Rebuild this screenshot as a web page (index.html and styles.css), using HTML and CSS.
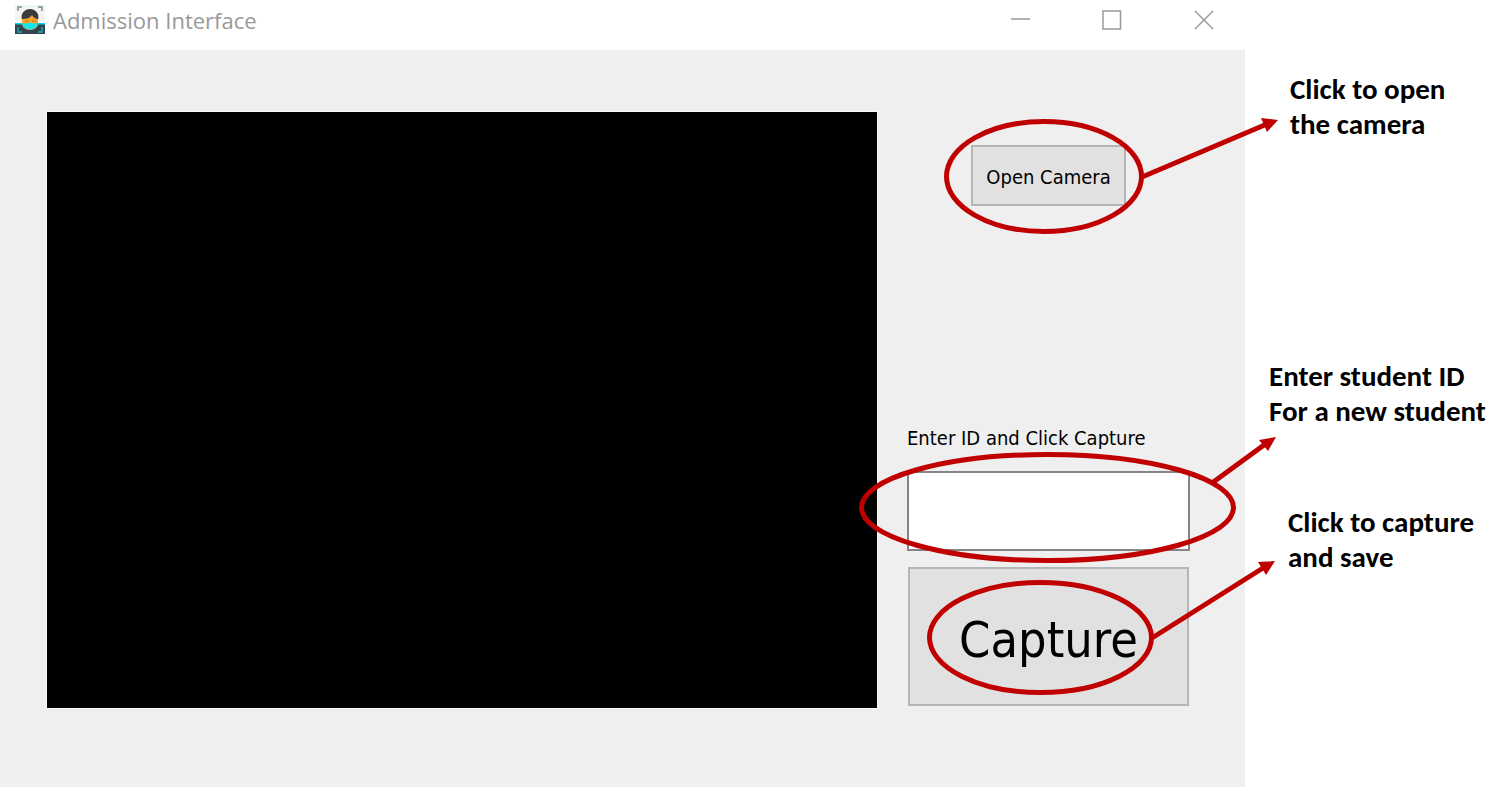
FILE: index.html
```
<!DOCTYPE html>
<html lang="en">
<head>
<meta charset="utf-8">
<title>Admission Interface</title>
<link rel="stylesheet" href="styles.css">
</head>
<body>
<div class="page">
  <main class="window">
    <header class="titlebar">
      <svg class="app-icon" width="30" height="30" viewBox="0 0 30 30" aria-hidden="true">
        <rect width="30" height="29" fill="#f3f5f5"/>
        <path d="M3 6V2h4M23 2h4v4" fill="none" stroke="#6d8c92" stroke-width="1.4"/>
        <path d="M0 18h30v11H0z" fill="#35424f"/>
        <path d="M0 18h30v1.500H0z" fill="#12d5de"/>
        <path d="M7 15c-2-7 3-11 8-11s10 4 8 11l-1 3H8z" fill="#3b3b3d"/>
        <path d="M7 14c5 0 8-1 10-4 1 2 3 4 6 4v4c0 4-3 7-8 7s-8-3-8-7z" fill="#f9a62b"/>
        <path d="M10 16.500q2-1.500 4 0M17 16.500q2-1.500 4 0" fill="none" stroke="#b9741c"/>
        <path d="M7 18q2 0 4 .5l4-1 4 1q2-.5 4-.5c0 4-4 6.500-8 6.500S7 22 7 18z" fill="#19e3ea"/>
        <path d="M3 22v5h4M23 27h4v-5" fill="none" stroke="#18aebb" stroke-width="1.400"/>
      </svg>
      <h1 class="title">Admission Interface</h1>
      <div class="controls">
        <button class="control" type="button" aria-label="Minimize"><svg width="20" height="20" viewBox="0 0 20 20"><path d="M1 9h19"/></svg></button>
        <button class="control" type="button" aria-label="Maximize"><svg width="20" height="20" viewBox="0 0 20 20"><path d="M1 1h17.500v18H1z"/></svg></button>
        <button class="control" type="button" aria-label="Close"><svg width="20" height="20" viewBox="0 0 20 20"><path d="M1 1l18 18M19 1L1 19"/></svg></button>
      </div>
    </header>
    <div class="content">
      <div class="camera"></div>
      <form class="panel">
        <button class="open" type="button">Open Camera</button>
        <label class="label" for="student-id">Enter ID and Click Capture</label>
        <input class="field" id="student-id" type="text">
        <button class="capture" type="button">Capture</button>
      </form>
    </div>
  </main>
  <aside class="notes">
    <p class="note note-open">Click to open<br>the camera</p>
    <p class="note note-id">Enter student ID<br>For a new student</p>
    <p class="note note-capture">Click to capture<br>and save</p>
  </aside>
  <svg class="callouts" width="654" height="787" viewBox="850 0 654 787" aria-hidden="true">
    <g fill="none" stroke="#c00000" stroke-width="5">
      <ellipse cx="1044" cy="176.500" rx="97.500" ry="55"/>
      <ellipse cx="1047.500" cy="507.500" rx="186" ry="53"/>
      <ellipse cx="1040.500" cy="637.500" rx="111" ry="55"/>
      <path d="M1142 177L1267 124M1212 483L1264 445M1152 638L1263 568"/>
    </g>
    <path d="M1278 120L1261 118L1267 132ZM1276 437L1259 440L1268 451ZM1275 561L1258 562L1266 575Z" fill="#c00000"/>
  </svg>
</div>
</body>
</html>
```
FILE: styles.css
```
* {
  box-sizing: border-box;
}

body {
  margin: 0;
  background: #fff;
  color: #000;
}

.page {
  position: relative;
  display: grid;
  grid-template-columns: minmax(0, 1fr) 259px;
  min-height: 100vh;
}

.window {
  display: flex;
  flex-direction: column;
  background: #efefef;
}

.titlebar {
  display: flex;
  align-items: center;
  gap: 8px;
  height: 50px;
  padding: 0 31px 10px 15px;
  background: #fff;
}

.title {
  flex: 1;
  margin: 0;
  font: 400 22px/30px "Open Sans", "Noto Sans", sans-serif;
  color: #999;
}

.controls {
  display: flex;
  gap: 72px;
}

.control {
  display: flex;
  padding: 0;
  border: 0;
  background: none;
}

.control path {
  fill: none;
  stroke: #999;
  stroke-width: 1.5;
}

.content {
  display: grid;
  grid-template-columns: minmax(0, 1fr) 283px;
  gap: 30px;
  padding: 62px 55px 79px 47px;
}

.camera {
  min-height: 596px;
  background: #000;
  box-shadow: 0 0 0 1px #f8f8f8;
}

.panel {
  display: flex;
  flex-direction: column;
  padding-top: 33px;
  font-family: "DejaVu Sans Condensed", "DejaVu Sans", sans-serif;
}

.open,
.capture {
  padding: 2px 0 0;
  border: 2px solid #b5b5b5;
  background: #e1e1e1;
  font-family: inherit;
  color: #000;
}

.open {
  align-self: center;
  width: 155px;
  height: 61px;
  font-size: 20px;
}

.label {
  margin-top: 220px;
  font-size: 20px;
  line-height: 24px;
}

.field {
  width: 100%;
  height: 80px;
  margin-top: 21px;
  padding: 0 12px;
  border: 2px solid #858585;
  background: #fff;
  font: inherit;
  font-size: 20px;
}

.capture {
  height: 139px;
  margin: 16px 1px 0;
  padding-top: 6px;
  font-size: 50px;
}

.notes {
  padding: 72px 0 0 24px;
  font: 700 29px/35px Carlito, Lato, sans-serif;
}

.note {
  margin: 0;
  white-space: nowrap;
}

.note-open {
  padding-left: 21px;
}

.note-id {
  margin-top: 217px;
}

.note-capture {
  margin-top: 76px;
  padding-left: 19px;
}

.callouts {
  position: absolute;
  top: 0;
  right: 0;
  pointer-events: none;
}
```
